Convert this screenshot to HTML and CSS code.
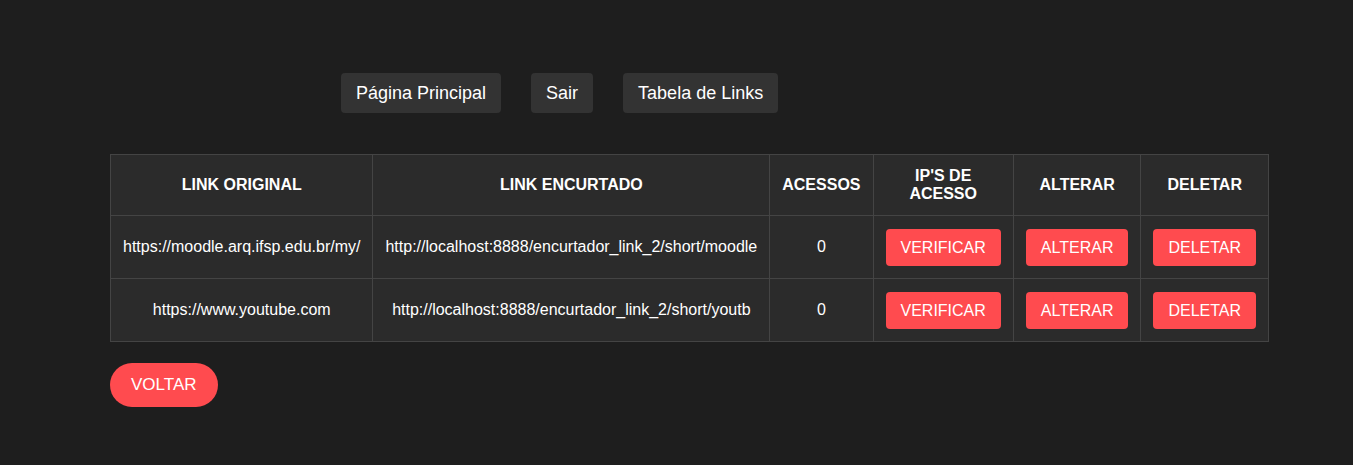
FILE: index.html
```html
<!DOCTYPE html>
<html lang="pt-BR">
<head>
<meta charset="utf-8">
<title>Tabela de Links</title>
<link rel="stylesheet" href="styles.css">
</head>
<body>
<div class="page">
  <nav class="nav">
    <a class="nav-btn" href="#">Página Principal</a>
    <a class="nav-btn" href="#">Sair</a>
    <a class="nav-btn" href="#">Tabela de Links</a>
  </nav>
  <table class="links">
    <thead>
      <tr>
        <th>LINK ORIGINAL</th>
        <th>LINK ENCURTADO</th>
        <th>ACESSOS</th>
        <th class="ips">IP'S DE ACESSO</th>
        <th>ALTERAR</th>
        <th>DELETAR</th>
      </tr>
    </thead>
    <tbody>
      <tr>
        <td>https://moodle.arq.ifsp.edu.br/my/</td>
        <td>http://localhost:8888/encurtador_link_2/short/moodle</td>
        <td>0</td>
        <td><a class="btn" href="#">VERIFICAR</a></td>
        <td><a class="btn" href="#">ALTERAR</a></td>
        <td><a class="btn" href="#">DELETAR</a></td>
      </tr>
      <tr>
        <td>https://www.youtube.com</td>
        <td>http://localhost:8888/encurtador_link_2/short/youtb</td>
        <td>0</td>
        <td><a class="btn" href="#">VERIFICAR</a></td>
        <td><a class="btn" href="#">ALTERAR</a></td>
        <td><a class="btn" href="#">DELETAR</a></td>
      </tr>
    </tbody>
  </table>
  <a class="back" href="#">VOLTAR</a>
</div>
</body>
</html>
```
FILE: styles.css
```css
html, body {
  margin: 0;
  padding: 0;
  background: #1e1e1e;
  color: #fff;
  font-family: "Liberation Sans", Arial, sans-serif;
}
.page {
  padding: 73px 0 0 110px;
  display: flex;
  flex-direction: column;
  align-items: flex-start;
}
.nav {
  display: flex;
  gap: 30px;
  margin-left: 231px;
}
.nav-btn {
  display: block;
  background: #333;
  color: #fff;
  text-decoration: none;
  font-size: 18px;
  line-height: 20px;
  padding: 10px 15px;
  border-radius: 4px;
}
.links {
  margin-top: 41px;
  border-collapse: collapse;
  background: #2b2b2b;
  font-size: 16px;
}
.links th, .links td {
  border: 1px solid #444;
  padding: 12px;
  text-align: center;
  vertical-align: middle;
  line-height: 18px;
}
.links th {
  font-weight: bold;
  height: 36px;
}
.links th.ips {
  width: 115px;
}
.links td {
  height: 38px;
}
.btn {
  display: inline-block;
  background: #ff4b4f;
  color: #fff;
  text-decoration: none;
  font-size: 16px;
  line-height: 19px;
  padding: 9px 15px;
  border-radius: 4px;
}
.back {
  margin-top: 21px;
  display: block;
  background: #ff4b4f;
  color: #fff;
  text-decoration: none;
  font-size: 17px;
  line-height: 20px;
  padding: 12px 21px;
  border-radius: 22px;
}
```
